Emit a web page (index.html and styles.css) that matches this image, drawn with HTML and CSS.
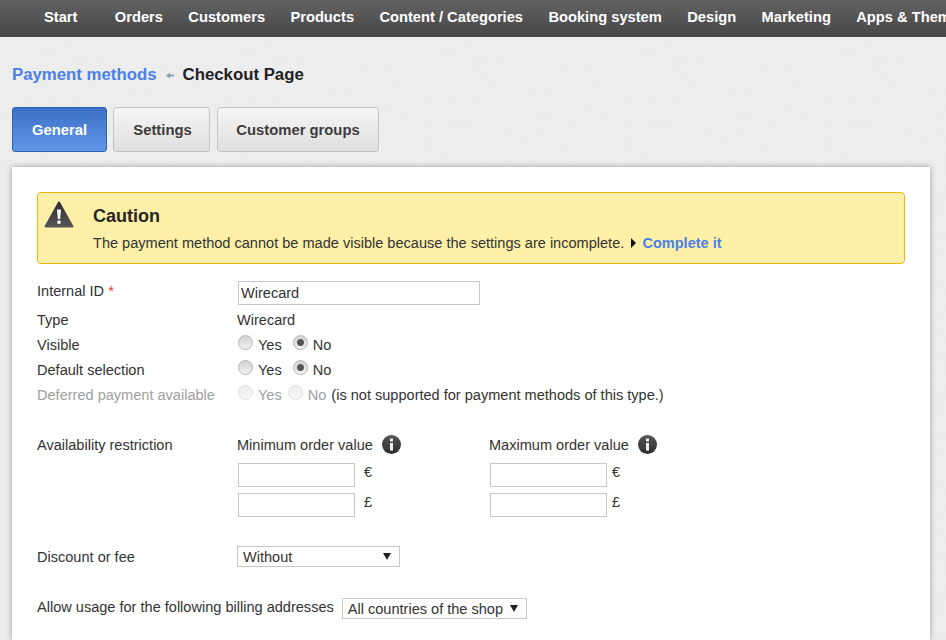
FILE: index.html

```html
<!DOCTYPE html>
<html>
<head>
  <title>Payment methods - Checkout Page</title>
  <meta charset="UTF-8" />
  <meta name="viewport" content="width=device-width, initial-scale=1.0"/>
  <link rel="stylesheet" href="styles.css">
</head>
<body>
  <nav class="topnav">
    <a class="nav-start">Start</a>
    <a>Orders</a>
    <a>Customers</a>
    <a>Products</a>
    <a>Content / Categories</a>
    <a>Booking system</a>
    <a>Design</a>
    <a>Marketing</a>
    <a>Apps &amp; Themes</a>
  </nav>

  <div class="crumbs">
    <a class="crumb-link">Payment methods</a>
    <svg class="crumb-arrow" width="8" height="7" viewBox="0 0 8 7"><path d="M0 3.5 4 0.5V2.6H8V4.4H4V6.5Z" fill="#8b9bb0"/></svg>
    <span>Checkout Page</span>
  </div>

  <div class="tabs">
    <a class="tab tab-active">General</a>
    <a class="tab tab-settings">Settings</a>
    <a class="tab tab-groups">Customer groups</a>
  </div>

  <main class="card">
    <div class="alert">
      <svg class="alert-icon" width="30" height="27" viewBox="0 0 30 27">
        <defs>
          <linearGradient id="warn" x1="0" y1="0" x2="0" y2="1">
            <stop offset="0" stop-color="#2e2e2e"/>
            <stop offset="1" stop-color="#555"/>
          </linearGradient>
        </defs>
        <path d="M15 1.5 28.5 25.5H1.5Z" fill="url(#warn)" stroke="url(#warn)" stroke-width="2" stroke-linejoin="round"/>
        <path d="M13 8.5H17L16.1 18H13.9Z" fill="#fff"/>
        <rect x="13.4" y="19.6" width="3.2" height="3.2" fill="#fff"/>
      </svg>
      <div>
        <h2>Caution</h2>
        <p>The payment method cannot be made visible because the settings are incomplete.
          <svg class="alert-arrow" width="5" height="10" viewBox="0 0 5 10"><path d="M0 0 5 5 0 10Z" fill="#111"/></svg>
          <a class="alert-link">Complete it</a>
        </p>
      </div>
    </div>

    <div class="row row-id">
      <label class="row-label">Internal ID <span class="req">*</span></label>
      <input class="text-input input-id" type="text" value="Wirecard">
    </div>
    <div class="row row-type">
      <span class="row-label">Type</span>
      <span>Wirecard</span>
    </div>
    <div class="row row-radio">
      <span class="row-label">Visible</span>
      <input type="radio" name="visible"><span class="opt">Yes</span>
      <input type="radio" name="visible" checked><span>No</span>
    </div>
    <div class="row row-radio">
      <span class="row-label">Default selection</span>
      <input type="radio" name="def"><span class="opt">Yes</span>
      <input type="radio" name="def" checked><span>No</span>
    </div>
    <div class="row row-radio row-off">
      <span class="row-label muted">Deferred payment available</span>
      <input type="radio" disabled><span class="opt-off muted">Yes</span>
      <input type="radio" disabled><span class="muted">No</span>
      <span class="note">(is not supported for payment methods of this type.)</span>
    </div>

    <div class="row row-limits">
      <span class="row-label">Availability restriction</span>
      <div class="limit limit-min">
        <div class="limit-head">Minimum order value
          <svg class="info" width="19" height="19" viewBox="0 0 19 19">
            <defs>
              <linearGradient id="inf" x1="0" y1="0" x2="0" y2="1">
                <stop offset="0" stop-color="#555"/>
                <stop offset="1" stop-color="#2c2c2c"/>
              </linearGradient>
            </defs>
            <circle cx="9.5" cy="9.5" r="9.5" fill="url(#inf)"/>
            <rect x="8" y="3.5" width="3" height="3" fill="#eee"/>
            <rect x="8" y="8" width="3" height="7.5" fill="#eee"/>
          </svg>
        </div>
        <div class="money"><input class="text-input input-money" type="text"><span>€</span></div>
        <div class="money"><input class="text-input input-money" type="text"><span>£</span></div>
      </div>
      <div class="limit">
        <div class="limit-head">Maximum order value
          <svg class="info" width="19" height="19" viewBox="0 0 19 19">
            <circle cx="9.5" cy="9.5" r="9.5" fill="url(#inf)"/>
            <rect x="8" y="3.5" width="3" height="3" fill="#eee"/>
            <rect x="8" y="8" width="3" height="7.5" fill="#eee"/>
          </svg>
        </div>
        <div class="money money-tight"><input class="text-input input-money" type="text"><span>€</span></div>
        <div class="money money-tight"><input class="text-input input-money" type="text"><span>£</span></div>
      </div>
    </div>

    <div class="row row-discount">
      <span class="row-label">Discount or fee</span>
      <div class="select select-discount"><span>Without</span><i class="caret"></i></div>
    </div>

    <div class="row row-billing">
      <span class="billing-label">Allow usage for the following billing addresses</span>
      <div class="select select-billing"><span>All countries of the shop</span><i class="caret"></i></div>
    </div>
  </main>
</body>
</html>
```

FILE: styles.css

```css
html, body { height: 640px; overflow: hidden; }
body { margin: 0; font-family: "Liberation Sans", Arial, sans-serif; font-size: 14.55px; color: #333; background: #f0f0f0 url("data:image/svg+xml,%3Csvg xmlns='http://www.w3.org/2000/svg' width='200' height='200'%3E%3Cfilter id='n'%3E%3CfeTurbulence type='fractalNoise' baseFrequency='.7' numOctaves='2'/%3E%3CfeColorMatrix values='0 0 0 0 .5 0 0 0 0 .5 0 0 0 0 .5 0 0 0 .12 0'/%3E%3C/filter%3E%3Crect width='200' height='200' filter='url(%23n)'/%3E%3C/svg%3E"); }

.topnav { display: flex; height: 37px; align-items: center; gap: 25.35px; padding-left: 44px; white-space: nowrap; overflow: hidden; background: linear-gradient(#626262, #464646); }
.topnav a { flex: none; color: #fff; font-weight: bold; font-size: 14.7px; padding-bottom: 3px; }
.topnav .nav-start { margin-right: 12px; }

.crumbs { display: flex; align-items: center; margin: 29px 0 0 12px; height: 18px; font-size: 16.8px; font-weight: bold; color: #222; }
.crumb-link { color: #4a80ea; }
.crumb-arrow { margin: 0 9px 0 9px; }

.tabs { display: flex; gap: 6px; margin: 23px 0 0 12px; }
.tab { display: flex; align-items: center; justify-content: center; height: 43px; border: 1px solid #c4c4c4; border-radius: 3px; font-size: 14.8px; font-weight: bold; color: #3c3c3c; background: linear-gradient(#f6f6f6, #dedede); }
.tab-active { width: 93px; color: #fff; border-color: #2f62ad; background: linear-gradient(#3c70c6, #6097e8); }
.tab-settings { width: 93px; padding-left: 2px; }
.tab-groups { width: 160px; margin-left: 1px; }

.card { box-sizing: border-box; width: 918px; height: 473px; margin: 15px 0 0 12px; padding: 25px 25px 0; background: #fff; box-shadow: 0 0 6px rgba(0, 0, 0, .35); }

.alert { display: flex; box-sizing: border-box; height: 72px; border: 1px solid #e9b80c; border-radius: 4px; background: #fff0a8; color: #333; }
.alert-icon { margin: 8px 19px 0 6px; flex: none; }
.alert h2 { margin: 13px 0 0; font-size: 18px; line-height: 20px; color: #262626; }
.alert p { margin: 8px 0 0; line-height: 18px; }
.alert-arrow { margin: 0 2px 0 3px; }
.alert-link { color: #4a80ea; font-weight: bold; }

.row { display: flex; align-items: center; }
.row-label { flex: none; width: 200px; }
.req { color: #f03838; }
.row-id { margin-top: 17px; height: 24px; }
.row-id .row-label { margin-bottom: 5px; }
.row-type { margin-top: 3px; height: 23px; }
.row-radio { margin-top: 2px; height: 23px; }
.row-radio input { appearance: none; box-sizing: border-box; width: 15px; height: 15px; margin: -4px 5px 0 1px; border: 1px solid #b5b5b5; border-radius: 50%; background: linear-gradient(#d2d2d2, #f2f2f2); }
.row-radio input:checked { background: radial-gradient(circle, #555 0 3px, transparent 4px), linear-gradient(#d2d2d2, #f2f2f2); }
.row-radio input:disabled { border-color: #dedede; background: linear-gradient(#ececec, #f8f8f8); }
.opt { margin-right: 10px; }
.opt-off { margin-right: 5px; }
.muted { color: #a0a0a0; }
.note { margin-left: 5px; }

.text-input { box-sizing: border-box; margin: 0; padding: 1px 2px; border: 1px solid #c8c8c8; background: #fff; font: inherit; color: #333; }
.input-id { width: 242px; height: 24px; margin-left: 1px; }
.input-money { width: 117px; height: 24px; margin-left: 1px; }

.row-limits { align-items: flex-start; margin-top: 29px; }
.row-limits .row-label { padding-top: 2px; }
.limit { width: 252px; }
.limit-head { display: flex; align-items: center; gap: 9px; height: 19px; }
.money { display: flex; align-items: center; gap: 9px; height: 24px; margin-top: 6px; }
.limit-head + .money { margin-top: 9px; }
.money span { padding-bottom: 6px; }
.money-tight { gap: 5px; }

.row-discount { margin-top: 29px; height: 21px; }
.select { display: flex; box-sizing: border-box; align-items: center; justify-content: space-between; height: 21px; border: 1px solid #c8c8c8; background: #fff; }
.select-discount { width: 163px; padding: 0 8px 0 5px; }
.select-billing { width: 185px; padding: 0 8px 0 5px; margin-left: 8px; }
.caret { width: 0; height: 0; border-left: 4px solid transparent; border-right: 4px solid transparent; border-top: 7px solid #222; }

.row-billing { margin-top: 31px; height: 21px; }
.billing-label { margin-bottom: 3px; }
```
